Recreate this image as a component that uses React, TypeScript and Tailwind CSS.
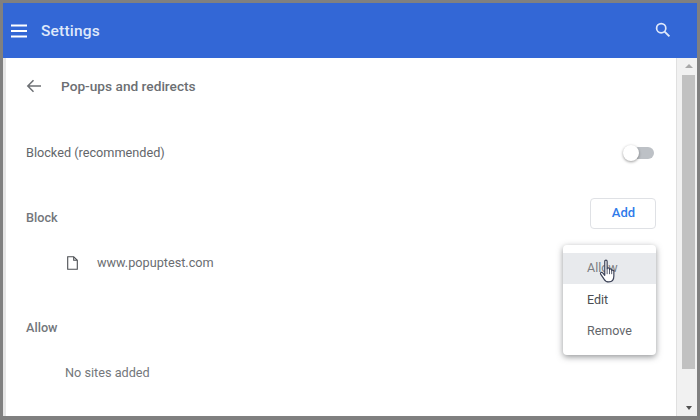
import React from "react";

function Hand() {
  return (
    <svg width="18" height="26" viewBox="0 0 16 24" className="absolute left-[36px] top-[6px]">
      <path
        d="M5 2.2c0-1.5 2.2-1.5 2.2 0V9c.1-1.2 2.2-1.2 2.2.1v.7c.2-1.1 2-1 2 .2v.8c.3-.9 2-.8 2 .4v4.6c0 3-1.5 5.4-4.6 5.4-2.4 0-3.6-1-4.6-2.8L1.2 14c-.7-1.2.9-2.3 1.9-1.2L5 15V2.2z"
        fill="#ffffff"
        stroke="#3c4257"
        strokeWidth="1.1"
        strokeLinejoin="round"
      />
      <path d="M7.2 9v5M9.4 10v4M11.4 11v3" stroke="#3c4257" strokeWidth="0.8" fill="none" />
    </svg>
  );
}

export default function App() {
  return (
    <div
      className="relative w-[700px] h-[420px] overflow-hidden bg-[#808080] pt-[3px] pl-[3px] pr-[3px] pb-[4px] flex flex-col"
      style={{ fontFamily: "Roboto, 'Liberation Sans', sans-serif" }}
    >
      <header className="h-[55px] shrink-0 bg-[#3367d6] flex items-center pl-[8px] pr-[26px]">
        <svg width="16" height="14" viewBox="0 0 16 14" className="shrink-0">
          <path d="M0 1.5h16M0 7h16M0 12.5h16" stroke="#ffffff" strokeWidth="2" />
        </svg>
        <span className="ml-[14px] mt-[2px] text-[15.5px] font-medium text-[#dfe8fa] tracking-[0.2px]">Settings</span>
        <svg width="16" height="16" viewBox="0 0 16 16" className="ml-auto shrink-0 mt-[-2px]">
          <circle cx="6.2" cy="6.2" r="4.6" fill="none" stroke="#dfe8fa" strokeWidth="1.7" />
          <path d="M9.6 9.6l4.8 4.8" stroke="#dfe8fa" strokeWidth="1.9" />
        </svg>
      </header>
      <div className="flex-1 flex min-h-0">
        <div className="w-[3px] bg-[#e6e6e6] shrink-0" />
        <main className="relative flex-1 bg-white flex flex-col pl-[20px] pr-[20px] text-[12.7px] text-[#5f6368]">
          <div className="h-[56px] flex items-center">
            <svg width="16" height="14" viewBox="0 0 16 14" className="shrink-0">
              <path d="M15 7H2M7.5 1.2 1.8 7l5.7 5.8" fill="none" stroke="#6d7074" strokeWidth="1.5" />
            </svg>
            <span className="ml-[19px] text-[13.7px] font-medium text-[#6c6f73]">Pop-ups and redirects</span>
          </div>
          <div className="mt-[29px] h-[20px] flex items-center justify-between pr-[2px]">
            <span className="text-[#63666a]">Blocked (recommended)</span>
            <div className="relative w-[31px] h-[12px] flex items-center justify-end">
              <div className="w-[25px] h-[12px] rounded-full bg-[#bdc1c6]" />
              <div className="absolute left-0 top-[-2px] w-[16px] h-[16px] rounded-full bg-white shadow-[0_1px_3px_rgba(0,0,0,0.4)]" />
            </div>
          </div>
          <div className="mt-[34px] h-[32px] flex items-center justify-between">
            <span className="mt-[10px] font-medium text-[#73767b]">Block</span>
            <div className="w-[66px] h-[31px] rounded-[4px] border border-[#dfe1e5] flex items-center justify-center pl-[1px] text-[13px] text-[#2f7bea] font-medium">
              Add
            </div>
          </div>
          <div className="mt-[24px] h-[20px] flex items-center pl-[41px]">
            <svg width="11" height="14" viewBox="0 0 11 14" className="shrink-0">
              <path d="M.7.7h6l3.6 3.6v9H.7zM6.7.7v3.6h3.6" fill="none" stroke="#4b4e52" strokeWidth="1.1" />
            </svg>
            <span className="ml-[19px] text-[#6a6d71]">www.popuptest.com</span>
          </div>
          <div className="mt-[45px] h-[20px] flex items-center">
            <span className="font-medium text-[#73767b]">Allow</span>
          </div>
          <div className="mt-[25px] h-[20px] flex items-center pl-[39px]">
            <span className="text-[#74777b]">No sites added</span>
          </div>
          <div className="absolute left-[557px] top-[187px] w-[93px] h-[110px] bg-white rounded-[4px] shadow-[0_2px_6px_rgba(60,64,67,0.55)] py-[8px] text-[12.5px]">
            <div className="relative h-[31px] bg-[#e8eaed] flex items-center pl-[24px] text-[#7b7e82]">
              Allow
              <Hand />
            </div>
            <div className="h-[32px] flex items-center pl-[24px] text-[#4a4d51]">Edit</div>
            <div className="h-[31px] flex items-center pl-[24px] text-[#63666a]">Remove</div>
          </div>
        </main>
        <div className="w-[21px] shrink-0 bg-[#f1f1f1] border-l border-[#e0e0e0] flex flex-col items-end pr-[2px]">
          <div className="h-[17px] w-[13px] flex items-center justify-center">
            <div className="w-0 h-0 border-x-[4px] border-x-transparent border-b-[4px] border-b-[#a8a8a8] mt-[-2px]" />
          </div>
          <div className="w-[13px] h-[294px] bg-[#c1c1c1]" />
          <div className="mt-auto h-[17px] w-[13px] flex items-center justify-center">
            <div className="w-0 h-0 border-x-[3px] border-x-transparent border-t-[4px] border-t-[#505050]" />
          </div>
        </div>
      </div>
    </div>
  );
}
